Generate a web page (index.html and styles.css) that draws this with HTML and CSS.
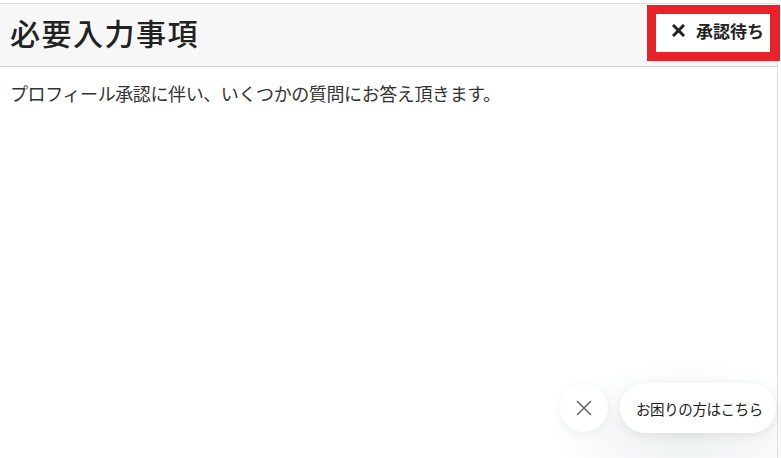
FILE: index.html
```html
<!DOCTYPE html>
<html lang="ja">
<head>
<meta charset="utf-8">
<link rel="stylesheet" href="styles.css">
</head>
<body>
<div class="page">
  <header class="header">
    <h1 class="title">必要入力事項</h1>
    <div class="status-frame">
      <div class="status">
        <svg class="status-x" width="13" height="13" viewBox="0 0 13 13"><path d="M2 2L11 11M11 2L2 11" stroke="#222" stroke-width="3" stroke-linecap="square" fill="none"/></svg>
        承認待ち
      </div>
    </div>
  </header>
  <p class="lead">プロフィール承認に伴い、いくつかの質問にお答え頂きます。</p>
</div>
<div class="chat">
  <button class="chat-close" aria-label="閉じる">
    <svg width="18" height="18" viewBox="0 0 18 18"><path d="M2 2L16 16M16 2L2 16" stroke="#666" stroke-width="1.5" fill="none"/></svg>
  </button>
  <div class="chat-pill">お困りの方はこちら</div>
</div>
</body>
</html>
```
FILE: styles.css
```css
html, body {
  margin: 0;
  padding: 0;
  background: #ffffff;
  font-family: "Noto Sans CJK JP", "Noto Sans", sans-serif;
  color: #222;
}
.page {
  margin-top: 3px;
  border-top: 1px solid #dcdce6;
  border-right: 1px solid #dcdcdc;
  width: 778px;
  height: 455px;
  box-sizing: border-box;
}
.header {
  height: 63px;
  background: #f7f7f7;
  border-bottom: 1px solid #d2d2d2;
  display: flex;
  align-items: center;
  padding: 0 0 6px 10px;
  box-sizing: border-box;
  position: relative;
}
.title {
  margin: 0;
  font-size: 30px;
  font-weight: 500;
  letter-spacing: 1.5px;
  color: #222;
  line-height: 1;
}
.status-frame {
  position: absolute;
  left: 647px;
  top: 1px;
  width: 133px;
  height: 56px;
  box-sizing: border-box;
  border: 9px solid #e8212b;
  border-right-width: 10px;
  background: #ffffff;
  display: flex;
  align-items: center;
  justify-content: center;
  padding: 0 0 6px 10px;
}
.status {
  font-size: 17px;
  font-weight: 700;
  color: #222;
  display: flex;
  align-items: center;
  letter-spacing: 0;
  white-space: nowrap;
}
.status-x {
  margin-right: 11px;
}
.lead {
  margin: 0;
  padding: 14px 0 0 10px;
  font-size: 18px;
  color: #333;
  line-height: 24px;
  letter-spacing: -0.4px;
}
.chat {
  position: absolute;
  left: 548px;
  top: 361px;
  width: 233px;
  height: 97px;
  display: flex;
  align-items: center;
  gap: 12px;
  padding: 0 0 3px 12px;
  box-sizing: border-box;
  background: radial-gradient(ellipse at 60% 70%, rgba(225,232,232,0.7), rgba(255,255,255,0) 70%);
}
.chat-close {
  width: 48px;
  height: 48px;
  border-radius: 50%;
  border: none;
  background: #ffffff;
  box-shadow: 0 2px 8px rgba(0,0,0,0.06);
  display: flex;
  align-items: center;
  justify-content: center;
  padding: 0;
  flex: none;
}
.chat-pill {
  height: 50px;
  width: 156px;
  padding-left: 16px;
  border-radius: 25px;
  background: #ffffff;
  box-shadow: 0 3px 10px rgba(0,0,0,0.07);
  display: flex;
  align-items: center;
  font-size: 14.5px;
  letter-spacing: -0.4px;
  color: #222;
  white-space: nowrap;
  box-sizing: border-box;
  flex: none;
}
```
